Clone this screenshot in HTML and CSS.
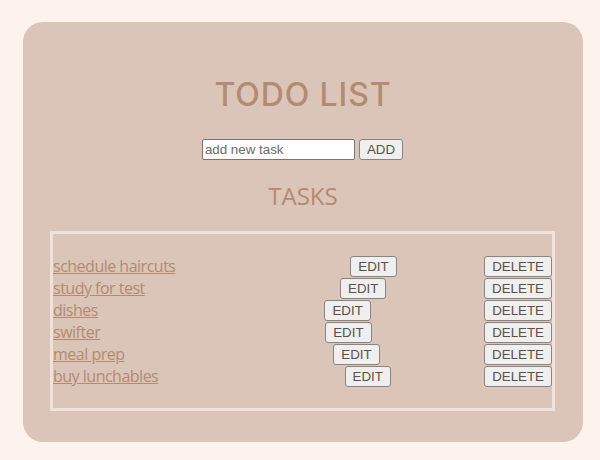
FILE: index.html
```html
<!DOCTYPE html>
<html lang="en">
<head>
<meta charset="utf-8">
<title>Todo List</title>
<link rel="stylesheet" href="styles.css">
</head>
<body>
<main class="card">
  <h1 class="title">TODO LIST</h1>
  <form class="add-form">
    <input class="task-input" type="text" placeholder="add new task">
    <button class="btn" type="button">ADD</button>
  </form>
  <h2 class="subtitle">TASKS</h2>
  <section class="task-box">
    <ul class="task-list">
      <li class="task"><a class="task-name" href="#">schedule haircuts</a><span class="spacer"></span><button class="btn">EDIT</button><button class="btn">DELETE</button></li>
      <li class="task"><a class="task-name" href="#">study for test</a><span class="spacer"></span><button class="btn">EDIT</button><button class="btn">DELETE</button></li>
      <li class="task"><a class="task-name" href="#">dishes</a><span class="spacer"></span><button class="btn">EDIT</button><button class="btn">DELETE</button></li>
      <li class="task"><a class="task-name" href="#">swifter</a><span class="spacer"></span><button class="btn">EDIT</button><button class="btn">DELETE</button></li>
      <li class="task"><a class="task-name" href="#">meal prep</a><span class="spacer"></span><button class="btn">EDIT</button><button class="btn">DELETE</button></li>
      <li class="task"><a class="task-name" href="#">buy lunchables</a><span class="spacer"></span><button class="btn">EDIT</button><button class="btn">DELETE</button></li>
    </ul>
  </section>
</main>
</body>
</html>
```

FILE: styles.css
```css
html, body {
  margin: 0;
  padding: 0;
}
body {
  background: #fdf2ec;
  padding: 22px 17px 0 23px;
  font-family: "Liberation Sans", Arial, sans-serif;
}
.card {
  background: #dbc5b9;
  border-radius: 20px;
  padding: 57px 0 31px;
  display: flex;
  flex-direction: column;
  align-items: center;
}
.title {
  margin: 0;
  font-family: Inter, "DejaVu Sans", sans-serif;
  font-weight: 500;
  font-size: 32px;
  line-height: 32px;
  letter-spacing: 0.9px;
  color: #b38a72;
}
.add-form {
  margin: 28px 1px 0 0;
  display: flex;
  gap: 4px;
  align-items: center;
}
.task-input {
  width: 153px;
  height: 21px;
  box-sizing: border-box;
  border: 1px solid #767676;
  border-radius: 2px;
  padding: 1px 2px;
  font-family: "Liberation Sans", Arial, sans-serif;
  font-size: 13.33px;
  background: #fff;
}
.task-input::placeholder {
  color: #6f6a66;
}
.btn {
  font-family: "Liberation Sans", Arial, sans-serif;
  font-size: 13.33px;
  color: #5e5046;
  background: #efefef;
  border: 1px solid #8a8480;
  border-radius: 3px;
  padding: 1px 7px;
  height: 21px;
  box-sizing: border-box;
  line-height: 17px;
}
.subtitle {
  margin: 24px 0 0;
  font-family: "Open Sans", sans-serif;
  font-weight: 500;
  font-size: 24px;
  line-height: 24px;
  color: #b38a72;
}
.task-box {
  margin: 23px 1px 0 0;
  width: 505px;
  box-sizing: border-box;
  border: 3px solid #efe2da;
  padding: 21px 0;
}
.task-list {
  list-style: none;
  margin: 0;
  padding: 0;
}
.task {
  display: flex;
  justify-content: space-between;
  align-items: center;
  height: 22px;
}
.task-name {
  font-family: "Open Sans", sans-serif;
  font-size: 16px;
  letter-spacing: -0.5px;
  line-height: 22px;
  color: #b38a72;
}
.spacer {
  width: 0;
}
```
